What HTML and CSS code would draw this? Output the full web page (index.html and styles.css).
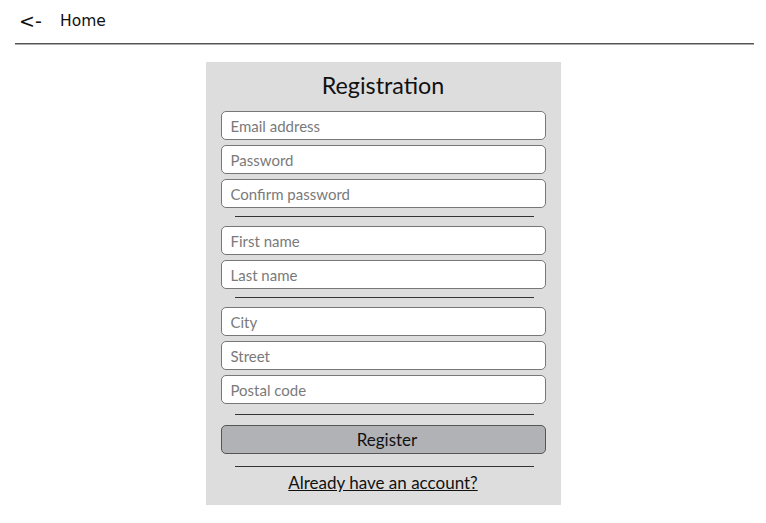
FILE: index.html
```html
<!DOCTYPE html>
<html>
<head>
<meta charset="utf-8">
<link rel="stylesheet" href="styles.css">
</head>
<body>
<header class="topbar">
  <span class="back">&lt;-</span>
  <span class="home">Home</span>
</header>
<div class="rule"></div>
<main class="page">
  <form class="card">
    <h1 class="title">Registration</h1>
    <div class="group">
      <input class="field" type="text" placeholder="Email address">
      <input class="field" type="password" placeholder="Password">
      <input class="field" type="password" placeholder="Confirm password">
    </div>
    <div class="sep"></div>
    <div class="group">
      <input class="field" type="text" placeholder="First name">
      <input class="field" type="text" placeholder="Last name">
    </div>
    <div class="sep"></div>
    <div class="group">
      <input class="field" type="text" placeholder="City">
      <input class="field" type="text" placeholder="Street">
      <input class="field" type="text" placeholder="Postal code">
    </div>
    <div class="sep sep-b"></div>
    <button class="btn" type="button">Register</button>
    <div class="sep sep-c"></div>
    <a class="link" href="#">Already have an account?</a>
  </form>
</main>
</body>
</html>
```
FILE: styles.css
```css
html, body {
  margin: 0;
  padding: 0;
  background: #ffffff;
}
body {
  font-family: "Lato", "Open Sans", sans-serif;
  color: #111;
}
.topbar {
  display: flex;
  align-items: center;
  height: 42px;
  padding-left: 19px;
  font-family: "DejaVu Sans", sans-serif;
  color: #111;
}
.back {
  font-size: 19px;
  width: 41px;
}
.home {
  font-size: 15.5px;
}
.rule {
  margin: 1px 12px 0 15px;
  height: 0;
  border-top: 1px solid #555;
  border-bottom: 1px solid #aaa;
}
.page {
  display: flex;
  justify-content: center;
  padding-top: 17px;
}
.card {
  width: 355px;
  box-sizing: border-box;
  background: #dddddd;
  padding: 0 15px 12px;
  display: flex;
  flex-direction: column;
}
.title {
  margin: 0;
  height: 49px;
  box-sizing: border-box;
  padding-top: 8px;
  font-size: 23.3px;
  font-weight: 400;
  line-height: 30px;
  text-align: center;
  color: #111;
}
.group {
  display: flex;
  flex-direction: column;
  gap: 5px;
}
.field {
  display: block;
  width: 100%;
  height: 29px;
  box-sizing: border-box;
  margin: 0;
  padding: 0 9px;
  border: 1px solid #777;
  border-radius: 5px;
  background: #fff;
  font-family: inherit;
  font-size: 15px;
  color: #222;
  outline: none;
}
.field::placeholder {
  color: #7a7a7a;
}
.sep {
  height: 1px;
  background: #333;
  margin: 8px 12px 9px 14px;
}
.sep-b {
  margin: 10px 12px 10px 14px;
}
.sep-c {
  margin: 12px 12px 5px 14px;
}
.btn {
  display: block;
  width: 100%;
  height: 29px;
  box-sizing: border-box;
  margin: 0;
  padding: 0 0 0 8px;
  border: 1px solid #555;
  border-radius: 5px;
  background: #b1b2b5;
  font-family: inherit;
  font-size: 17px;
  color: #111;
}
.link {
  align-self: center;
  font-size: 17px;
  line-height: 21px;
  color: #111;
  text-decoration: underline;
}
```
